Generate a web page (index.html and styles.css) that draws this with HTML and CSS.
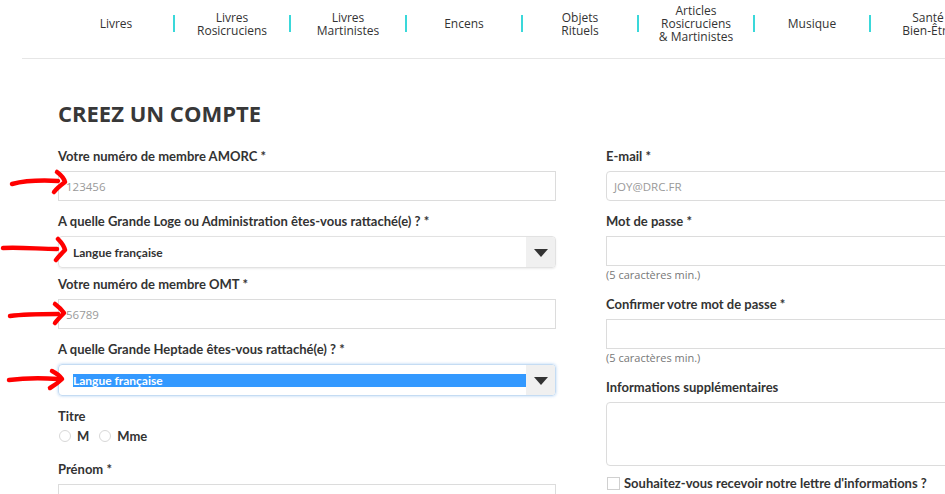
FILE: index.html
```html
<!DOCTYPE html>
<html lang="fr">
<head>
<meta charset="utf-8">
<title>Créez un compte</title>
<link rel="stylesheet" href="styles.css">
</head>
<body>
<header class="topbar">
  <nav class="menu">
    <a class="menu-item">Livres</a>
    <a class="menu-item">Livres<br>Rosicruciens</a>
    <a class="menu-item">Livres<br>Martinistes</a>
    <a class="menu-item">Encens</a>
    <a class="menu-item">Objets<br>Rituels</a>
    <a class="menu-item">Articles<br>Rosicruciens<br>&amp; Martinistes</a>
    <a class="menu-item">Musique</a>
    <a class="menu-item last">Santé<br>Bien-Être</a>
  </nav>
</header>

<main class="page">
  <h1 class="title">CREEZ UN COMPTE</h1>
  <form class="form-grid">
    <div class="col">
      <div class="field">
        <label class="label">Votre numéro de membre AMORC *</label>
        <div class="input"><span class="ph">123456</span></div>
      </div>
      <div class="field tight">
        <label class="label">A quelle Grande Loge ou Administration êtes-vous rattaché(e) ? *</label>
        <div class="select"><span class="sel-text">Langue française</span><span class="sel-btn"><span class="tri"></span></span></div>
      </div>
      <div class="field">
        <label class="label">Votre numéro de membre OMT *</label>
        <div class="input"><span class="ph">56789</span></div>
      </div>
      <div class="field">
        <label class="label">A quelle Grande Heptade êtes-vous rattaché(e) ? *</label>
        <div class="select focus"><span class="sel-text"><span class="hl">Langue française</span></span><span class="sel-btn"><span class="tri"></span></span></div>
      </div>
      <div class="field radios-field">
        <label class="label">Titre</label>
        <div class="radios">
          <span class="radio"></span><span class="radio-label">M</span>
          <span class="radio"></span><span class="radio-label">Mme</span>
        </div>
      </div>
      <div class="field">
        <label class="label">Prénom *</label>
        <div class="input"></div>
      </div>
    </div>

    <div class="col">
      <div class="field">
        <label class="label">E-mail *</label>
        <div class="input rounded"><span class="ph">JOY@DRC.FR</span></div>
      </div>
      <div class="field with-hint">
        <label class="label">Mot de passe *</label>
        <div class="input"></div>
        <div class="hint">(5 caractères min.)</div>
      </div>
      <div class="field with-hint">
        <label class="label">Confirmer votre mot de passe *</label>
        <div class="input"></div>
        <div class="hint">(5 caractères min.)</div>
      </div>
      <div class="field">
        <label class="label">Informations supplémentaires</label>
        <div class="textarea"></div>
      </div>
      <div class="check-row">
        <span class="checkbox"></span><span class="check-label">Souhaitez-vous recevoir notre lettre d'informations ?</span>
      </div>
    </div>
  </form>
</main>

<svg class="annot" width="945" height="494" viewBox="0 0 945 494">
  <g fill="none" stroke="#f00" stroke-width="4.5" stroke-linecap="round" stroke-linejoin="round">
    <path d="M12 184 C24 181 40 180 58 181"/>
    <path d="M57 172 C61 175 64 178 65 182 C61 185 57 188 54 192"/>
    <path d="M3 248 C20 247 40 249 57 249"/>
    <path d="M58 239 C61 242 64 246 65 250 C62 253 59 256 56 260"/>
    <path d="M10 316 C25 314 42 314 58 314"/>
    <path d="M55 304 C59 307 62 310 64 313 C61 316 58 319 55 323"/>
    <path d="M9 380 C25 378 42 378 58 379"/>
    <path d="M52 371 C56 373 60 376 62 379 C59 382 55 385 50 388"/>
  </g>
</svg>
</body>
</html>
```
FILE: styles.css
```css
html, body {
  margin: 0;
  padding: 0;
  background: #fff;
  overflow: hidden;
}
body {
  width: 945px;
  height: 494px;
  font-family: "Open Sans", "Liberation Sans", sans-serif;
  color: #333;
  position: relative;
}
.topbar {
  margin-left: 22px;
  border-bottom: 1px solid #e6e6e6;
  height: 59px;
  box-sizing: border-box;
}
.menu {
  display: flex;
  margin-left: 36px;
  width: 1000px;
  height: 47px;
  align-items: center;
}
.menu-item {
  width: 116px;
  flex: none;
  text-align: center;
  font-size: 12px;
  line-height: 13px;
  color: #333;
  position: relative;
}
.menu-item::after {
  content: "";
  position: absolute;
  right: -1px;
  top: 50%;
  margin-top: -9px;
  width: 2px;
  height: 17px;
  background: #3ad8da;
}
.menu-item.last::after { display: none; }

.page {
  padding: 0 0 0 58px;
}
.title {
  margin: 39px 0 0;
  font-size: 22px;
  line-height: 30px;
  font-weight: 700;
  color: #383838;
}
.form-grid {
  display: grid;
  grid-template-columns: 498px 498px;
  column-gap: 50px;
  margin-top: 20px;
}
.col {
  display: flex;
  flex-direction: column;
}
.field {
  margin-bottom: 12px;
}
.field.tight {
  margin-bottom: 8px;
}
.field.with-hint {
  margin-bottom: 14px;
}
.label {
  display: block;
  font-family: "Lato", "Open Sans", sans-serif;
  font-weight: 700;
  font-size: 13px;
  line-height: 17px;
  color: #333;
  margin-bottom: 6px;
}
.input {
  height: 30px;
  box-sizing: border-box;
  border: 1px solid #dcdcdc;
  display: flex;
  align-items: center;
  padding-left: 7px;
}
.input.rounded {
  border-radius: 4px;
}
.ph {
  font-size: 11.5px;
  color: #9a9a9a;
}
.hint {
  font-size: 11px;
  color: #777;
  margin-top: 2px;
  line-height: 14px;
}
.select {
  height: 32px;
  box-sizing: border-box;
  border: 1px solid #e2e2e2;
  border-radius: 4px;
  box-shadow: 0 1px 2px rgba(0,0,0,0.08);
  display: flex;
  align-items: stretch;
  overflow: hidden;
}
.select.focus {
  border-color: #c5dcf3;
  box-shadow: 0 0 3px rgba(80,150,230,0.45);
}
.sel-text {
  flex: 1;
  display: flex;
  align-items: center;
  padding-left: 14px;
  font-family: "Lato", "Open Sans", sans-serif;
  font-weight: 700;
  font-size: 12px;
  color: #333;
}
.hl {
  background: #3399ff;
  color: #fff;
  width: 453px;
  line-height: 13px;
  height: 13px;
  display: block;
}
.sel-btn {
  width: 29px;
  background: #f0f0f0;
  display: flex;
  align-items: center;
  justify-content: center;
}
.tri {
  width: 0;
  height: 0;
  border-left: 7px solid transparent;
  border-right: 7px solid transparent;
  border-top: 8px solid #333;
  margin-top: 2px;
}
.radios-field {
  margin-bottom: 16px;
}
.radios-field .label {
  margin-bottom: 2px;
}
.radios {
  display: flex;
  align-items: center;
  height: 18px;
}
.radio {
  width: 10px;
  height: 10px;
  border: 1px solid #d8d8d8;
  border-radius: 50%;
  margin-left: 1px;
  margin-right: 6px;
}
.radio-label {
  font-family: "Lato", "Open Sans", sans-serif;
  font-weight: 700;
  font-size: 13px;
  margin-right: 9px;
}
.textarea {
  height: 64px;
  box-sizing: border-box;
  border: 1px solid #dcdcdc;
  border-radius: 4px;
}
.check-row {
  display: flex;
  align-items: center;
  margin-top: -3px;
}
.checkbox {
  width: 11px;
  height: 11px;
  border: 1px solid #d0d0d0;
  margin-left: 1px;
  margin-right: 4px;
}
.check-label {
  font-family: "Lato", "Open Sans", sans-serif;
  font-weight: 700;
  font-size: 13px;
}
.annot {
  position: absolute;
  left: 0;
  top: 0;
  pointer-events: none;
}
```
